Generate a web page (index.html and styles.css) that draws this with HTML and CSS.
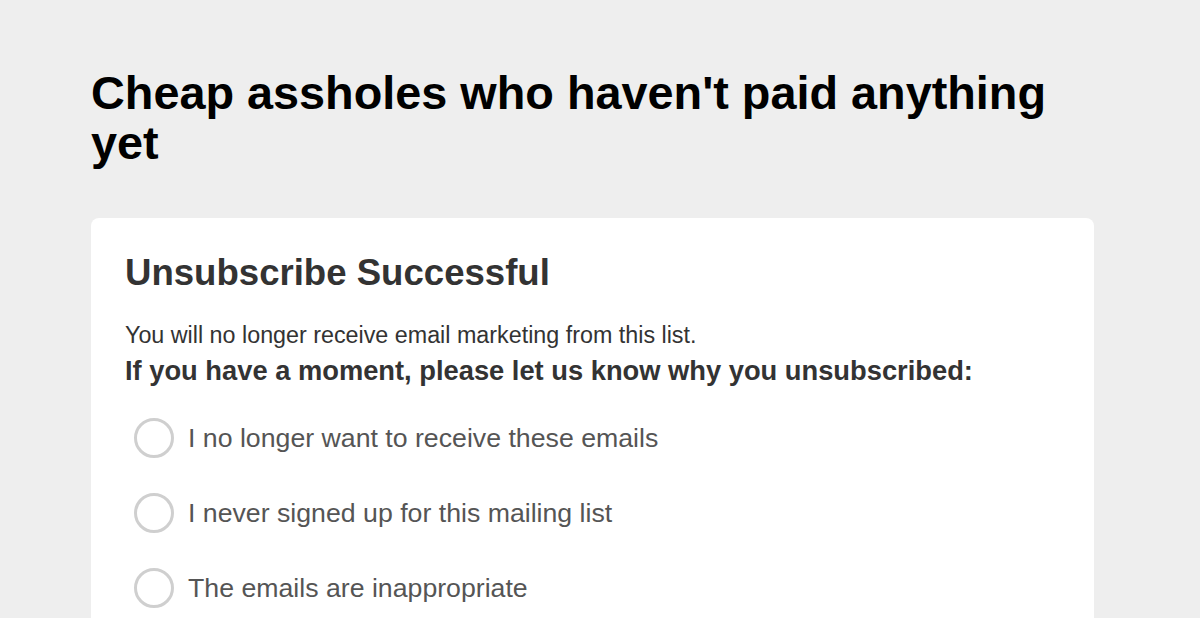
FILE: index.html
```html
<!DOCTYPE html>
<html>
<head>
<meta charset="utf-8">
<link rel="stylesheet" href="styles.css">
</head>
<body>
<div class="page">
  <h1 class="title">Cheap assholes who haven't paid anything yet</h1>
  <div class="card">
    <h2 class="card-title">Unsubscribe Successful</h2>
    <p class="note">You will no longer receive email marketing from this list.</p>
    <p class="ask">If you have a moment, please let us know why you unsubscribed:</p>
    <ul class="options">
      <li class="option"><span class="radio"></span><span class="label">I no longer want to receive these emails</span></li>
      <li class="option"><span class="radio"></span><span class="label">I never signed up for this mailing list</span></li>
      <li class="option"><span class="radio"></span><span class="label">The emails are inappropriate</span></li>
    </ul>
  </div>
</div>
</body>
</html>
```

FILE: styles.css
```css
html, body {
  margin: 0;
  padding: 0;
  background: #eeeeee;
  font-family: "Liberation Sans", Arial, Helvetica, sans-serif;
  overflow: hidden;
}
.page {
  padding: 68px 106px 0 91px;
}
.title {
  margin: 0;
  font-size: 46.8px;
  line-height: 50px;
  font-weight: bold;
  color: #000;
  max-width: 1000px;
}
.card {
  margin-top: 50px;
  width: 1003px;
  box-sizing: border-box;
  background: #fff;
  border-radius: 8px;
  padding: 33px 34px 40px 34px;
}
.card-title {
  margin: 0;
  font-size: 36.6px;
  line-height: 44px;
  font-weight: bold;
  color: #333;
}
.note {
  margin: 26px 0 0 0;
  font-size: 23.3px;
  line-height: 28px;
  color: #333;
}
.ask {
  margin: 6px 0 0 0;
  font-size: 27.3px;
  line-height: 32px;
  font-weight: bold;
  color: #333;
}
.options {
  list-style: none;
  margin: 31px 0 0 0;
  padding: 0 0 0 9px;
  display: flex;
  flex-direction: column;
  gap: 35px;
}
.option {
  display: flex;
  align-items: center;
  gap: 14px;
  height: 40px;
}
.radio {
  width: 40px;
  height: 40px;
  box-sizing: border-box;
  border: 3px solid #cfcfcf;
  border-radius: 50%;
  flex: none;
}
.label {
  font-size: 26.7px;
  color: #555;
}
```
